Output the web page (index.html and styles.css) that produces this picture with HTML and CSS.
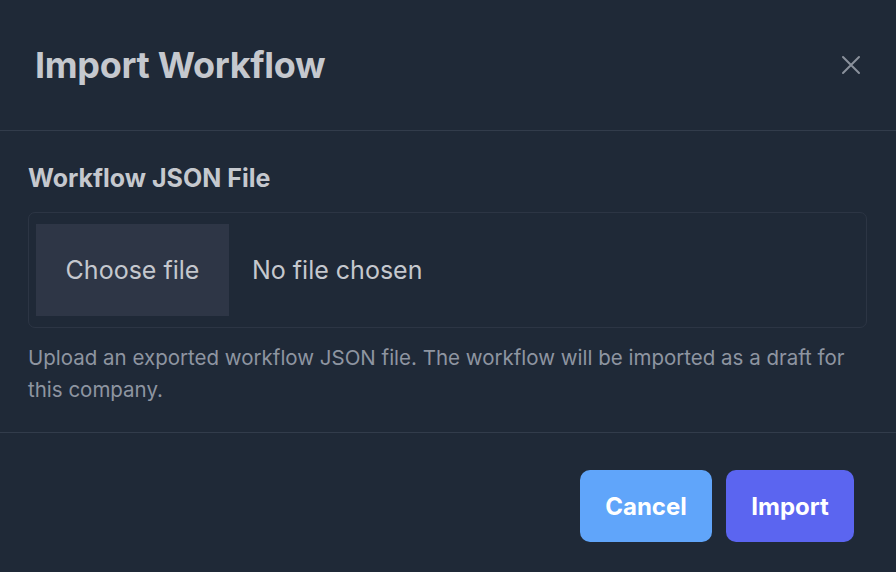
FILE: index.html
```html
<!DOCTYPE html>
<html lang="en">
<head>
<meta charset="utf-8">
<title>Import Workflow</title>
<link rel="stylesheet" href="styles.css">
</head>
<body>
<div class="modal">
  <header class="modal-header">
    <h2 class="modal-title">Import Workflow</h2>
    <button class="close-btn" aria-label="Close">
      <svg width="22" height="22" viewBox="0 0 22 22" fill="none" stroke="currentColor" stroke-width="2" stroke-linecap="round"><path d="M3 3L19 19M19 3L3 19"/></svg>
    </button>
  </header>
  <section class="modal-body">
    <label class="field-label">Workflow JSON File</label>
    <div class="file-input">
      <span class="file-btn">Choose file</span>
      <span class="file-name">No file chosen</span>
    </div>
    <p class="help">Upload an exported workflow JSON file. The workflow will be imported as a draft for this company.</p>
  </section>
  <footer class="modal-footer">
    <button class="btn btn-cancel">Cancel</button>
    <button class="btn btn-import">Import</button>
  </footer>
</div>
</body>
</html>
```
FILE: styles.css
```css
* { box-sizing: border-box; }
html, body { margin: 0; padding: 0; background: #1f2937; }
body { font-family: Inter, "Noto Sans", sans-serif; }
.modal {
  width: 896px;
  height: 572px;
  background: #1f2937;
  display: flex;
  flex-direction: column;
}
.modal-header {
  height: 131px;
  border-bottom: 1px solid #323c4b;
  display: flex;
  align-items: center;
  justify-content: space-between;
  padding: 0 34px 0 35px;
}
.modal-title {
  margin: 0;
  font-size: 36px;
  font-weight: 700;
  color: #c5c8ce;
  letter-spacing: -0.3px;
  line-height: 1;
}
.close-btn {
  background: none;
  border: 0;
  padding: 0;
  color: #8a919c;
  display: flex;
  width: 22px;
  height: 22px;
}
.modal-body {
  padding: 32px 29px 0 28px;
  height: 302px;
  border-bottom: 1px solid #323c4b;
}
.field-label {
  display: block;
  font-size: 25px;
  font-weight: 700;
  color: #c5c8ce;
  line-height: 30px;
  margin-bottom: 19px;
}
.file-input {
  height: 116px;
  border: 1px solid #2c3544;
  border-radius: 7px;
  display: flex;
  align-items: center;
  padding: 0 7px;
}
.file-btn {
  width: 193px;
  height: 92px;
  background: #2e3646;
  display: flex;
  align-items: center;
  justify-content: center;
  font-size: 25px;
  color: #c5c8ce;
}
.file-name {
  margin-left: 23px;
  font-size: 25px;
  color: #c5c8ce;
}
.help {
  margin: 14px 0 0;
  font-size: 20.5px;
  line-height: 32px;
  color: #8e95a1;
}
.modal-footer {
  flex: 1;
  display: flex;
  justify-content: flex-end;
  align-items: flex-start;
  gap: 14px;
  padding: 37px 42px 0 0;
}
.btn {
  height: 72px;
  border: 0;
  border-radius: 10px;
  font-family: Inter, "Noto Sans", sans-serif;
  font-size: 24px;
  font-weight: 700;
  color: #ffffff;
}
.btn-cancel { width: 132px; background: #60a5fa; }
.btn-import { width: 128px; background: #5b65f0; }
```
